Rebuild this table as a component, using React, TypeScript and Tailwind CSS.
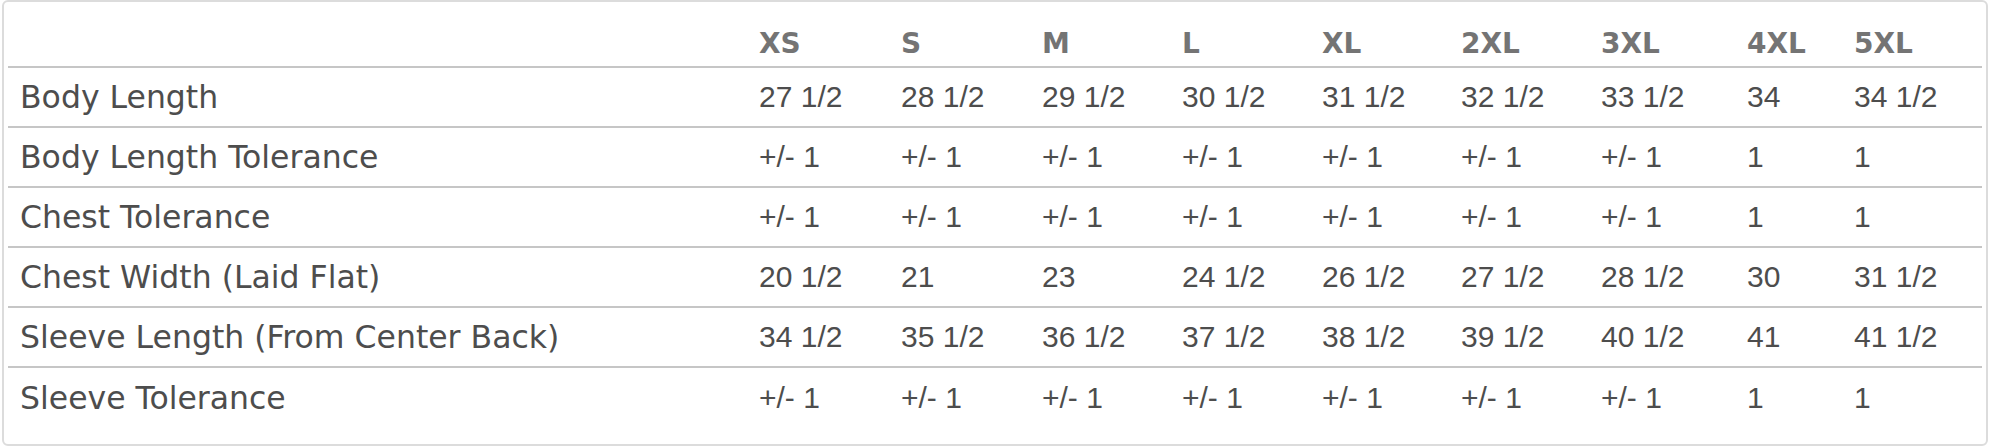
const sizes = ["XS", "S", "M", "L", "XL", "2XL", "3XL", "4XL", "5XL"];

const rows: { label: string; values: string[] }[] = [
  {
    label: "Body Length",
    values: ["27 1/2", "28 1/2", "29 1/2", "30 1/2", "31 1/2", "32 1/2", "33 1/2", "34", "34 1/2"],
  },
  {
    label: "Body Length Tolerance",
    values: ["+/- 1", "+/- 1", "+/- 1", "+/- 1", "+/- 1", "+/- 1", "+/- 1", "1", "1"],
  },
  {
    label: "Chest Tolerance",
    values: ["+/- 1", "+/- 1", "+/- 1", "+/- 1", "+/- 1", "+/- 1", "+/- 1", "1", "1"],
  },
  {
    label: "Chest Width (Laid Flat)",
    values: ["20 1/2", "21", "23", "24 1/2", "26 1/2", "27 1/2", "28 1/2", "30", "31 1/2"],
  },
  {
    label: "Sleeve Length (From Center Back)",
    values: ["34 1/2", "35 1/2", "36 1/2", "37 1/2", "38 1/2", "39 1/2", "40 1/2", "41", "41 1/2"],
  },
  {
    label: "Sleeve Tolerance",
    values: ["+/- 1", "+/- 1", "+/- 1", "+/- 1", "+/- 1", "+/- 1", "+/- 1", "1", "1"],
  },
];

const cols =
  "grid grid-cols-[739px_142px_141px_140px_140px_139px_140px_146px_107px_138px]";

export default function App() {
  return (
    <div className="bg-white w-[1992px] h-[448px] pl-[2px]">
      <div className="w-[1986px] h-[446px] border-2 border-[#dcdcdc] rounded-[6px] px-[4px] pb-[16px]">
        <div className={`${cols} h-[66px] items-end border-b-2 border-[#c6c6c6] pb-[6px]`}>
          <div />
          {sizes.map((s) => (
            <div
              key={s}
              className="pl-[12px] text-[28px] leading-[32px] font-bold text-[#747474] font-['DejaVu_Sans',sans-serif]"
            >
              {s}
            </div>
          ))}
        </div>
        {rows.map((row, i) => (
          <div
            key={row.label}
            className={`${cols} h-[60px] items-center ${
              i < rows.length - 1 ? "border-b-2 border-[#c6c6c6]" : ""
            }`}
          >
            <div className="pl-[12px] text-[31.5px] leading-[36px] text-[#4d4d4d] font-['DejaVu_Sans',sans-serif] whitespace-nowrap">
              {row.label}
            </div>
            {row.values.map((v, j) => (
              <div
                key={j}
                className="pl-[12px] text-[30px] leading-[34px] text-[#4d4d4d] font-['Liberation_Sans',sans-serif] whitespace-nowrap"
              >
                {v}
              </div>
            ))}
          </div>
        ))}
      </div>
    </div>
  );
}
